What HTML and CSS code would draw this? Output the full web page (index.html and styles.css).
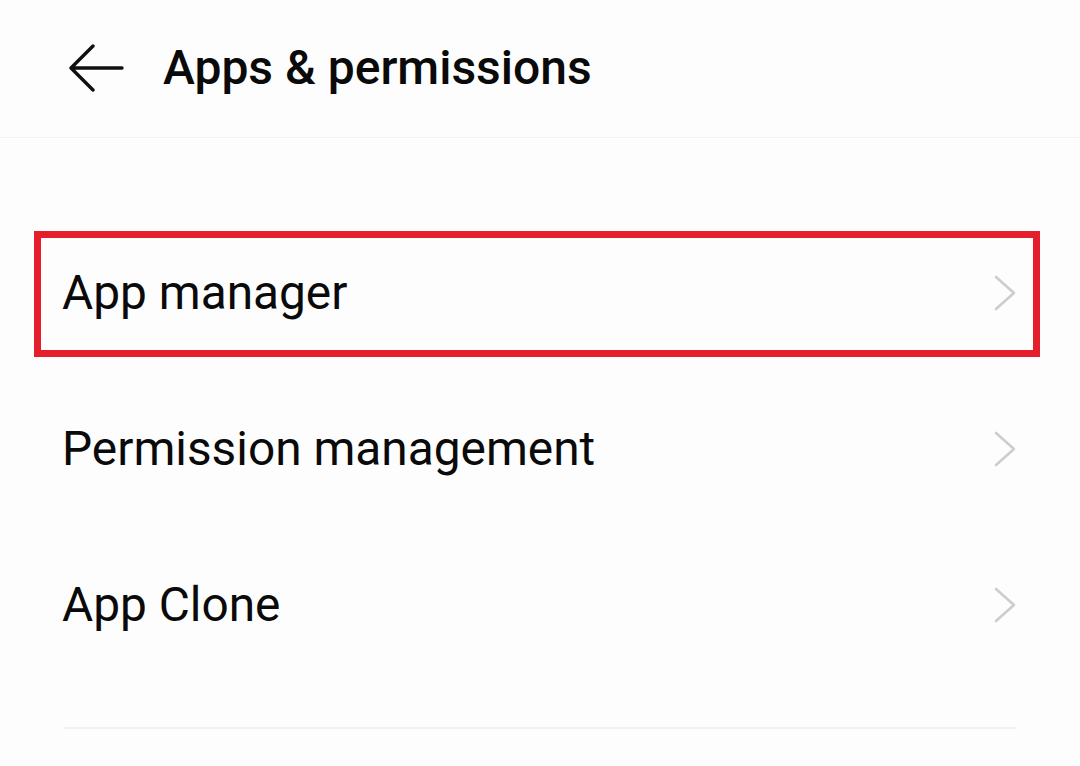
FILE: index.html
```html
<!DOCTYPE html>
<html>
<head>
<meta charset="utf-8">
<link rel="stylesheet" href="styles.css">
</head>
<body>
<div class="page">
  <header class="header">
    <svg class="back" width="56" height="48" viewBox="0 0 56 48">
      <path d="M25 2 L3 24 L25 46 M3 24 L54 24" fill="none" stroke="#111" stroke-width="3.4" stroke-linecap="round" stroke-linejoin="round"/>
    </svg>
    <h1 class="title">Apps &amp; permissions</h1>
  </header>
  <div class="list">
    <div class="row">
      <span class="label">App manager</span>
      <svg class="chev" width="24" height="38" viewBox="0 0 24 38"><path d="M3 3 L21 19 L3 35" fill="none" stroke="#cdcdcd" stroke-width="2.6" stroke-linecap="round" stroke-linejoin="round"/></svg>
      <div class="highlight"></div>
    </div>
    <div class="row">
      <span class="label">Permission management</span>
      <svg class="chev" width="24" height="38" viewBox="0 0 24 38"><path d="M3 3 L21 19 L3 35" fill="none" stroke="#cdcdcd" stroke-width="2.6" stroke-linecap="round" stroke-linejoin="round"/></svg>
    </div>
    <div class="row">
      <span class="label">App Clone</span>
      <svg class="chev" width="24" height="38" viewBox="0 0 24 38"><path d="M3 3 L21 19 L3 35" fill="none" stroke="#cdcdcd" stroke-width="2.6" stroke-linecap="round" stroke-linejoin="round"/></svg>
    </div>
  </div>
  <div class="divider"></div>
</div>
</body>
</html>
```

FILE: styles.css
```css
html, body {
  margin: 0;
  padding: 0;
  background: #fdfdfd;
}
.page {
  width: 1080px;
  height: 766px;
  overflow: hidden;
  font-family: Roboto, "Liberation Sans", Arial, sans-serif;
  color: #0a0a0a;
}
.header {
  height: 138px;
  border-bottom: 1px solid #f1f1f1;
  display: flex;
  align-items: center;
  padding-left: 68px;
  box-sizing: border-box;
  padding-bottom: 2px;
}
.back {
  display: block;
  flex: none;
}
.title {
  margin: 0 0 0 39px;
  font-size: 48px;
  font-weight: 500;
  letter-spacing: 0;
}
.list {
  padding-top: 77px;
}
.row {
  position: relative;
  height: 156px;
  display: flex;
  align-items: center;
  justify-content: space-between;
  padding: 0 63px 0 62px;
}
.label {
  font-size: 47.8px;
  font-weight: 400;
}
.chev {
  display: block;
  flex: none;
}
.highlight {
  position: absolute;
  left: 34px;
  right: 40px;
  top: 16px;
  bottom: 14px;
  border: 7px solid #e41e2b;
  box-sizing: border-box;
}
.divider {
  margin: 44px 64px 0 64px;
  height: 2px;
  background: #f2f2f2;
}
```
